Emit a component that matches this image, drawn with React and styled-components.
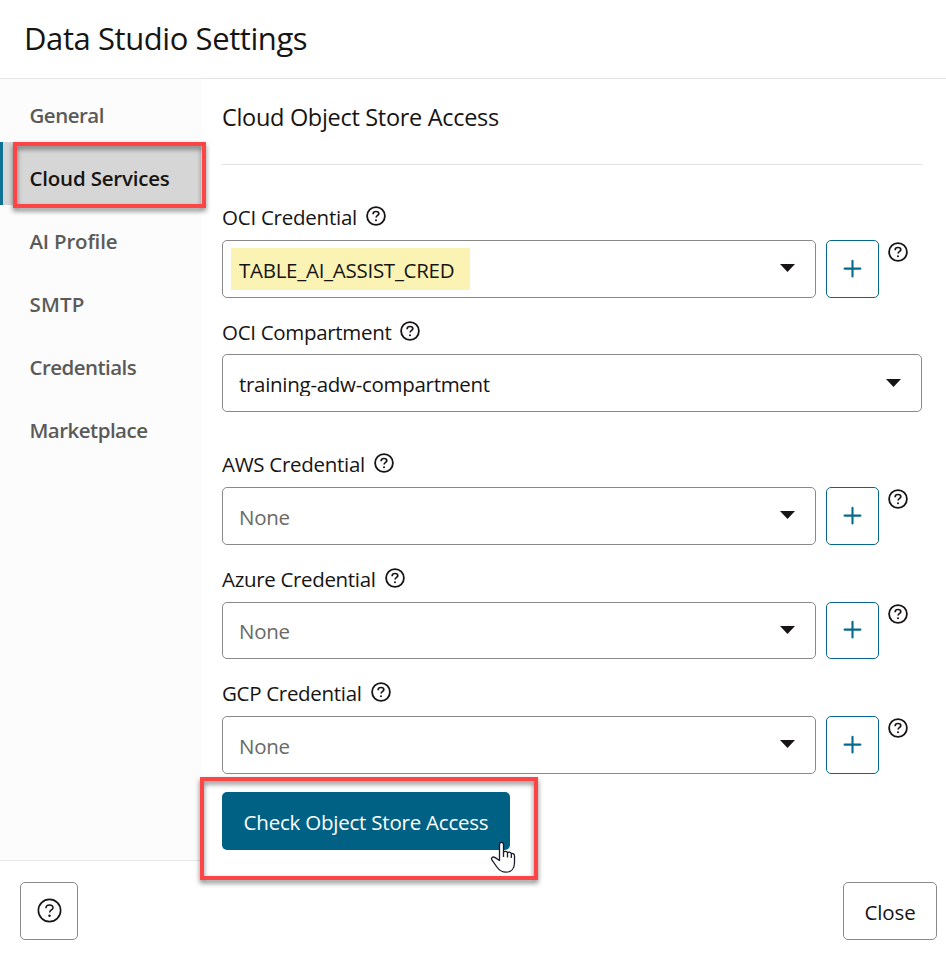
import React from "react";
import styled, { createGlobalStyle } from "styled-components";

const GlobalStyle = createGlobalStyle`
  * { box-sizing: border-box; }
  body {
    margin: 0;
    background: #fff;
    color: #161513;
    font-family: "Open Sans", "Noto Sans", sans-serif;
    font-size: 20.5px;
    line-height: 28px;
  }
  button { font: inherit; color: inherit; cursor: pointer; }
`;

const Dialog = styled.main`
  display: flex;
  flex-direction: column;
  width: 946px;
  height: 958px;
  overflow: hidden;
`;

const Header = styled.header`
  height: 79px;
  padding: 17px 0 0 24px;
  border-bottom: 1px solid #e4e4e4;
`;

const Title = styled.h1`
  margin: 0;
  font-size: 31px;
  font-weight: 400;
  line-height: 42px;
  letter-spacing: -0.42px;
`;

const Body = styled.div`
  display: flex;
  height: 782px;
`;

const Sidebar = styled.nav`
  width: 201px;
  background: #fcfcfc;
  border-bottom: 1px solid #e6e6e6;
`;

const NavItem = styled.a`
  display: block;
  position: relative;
  height: 63px;
  padding: 22px 0 0 ${(p) => (p.$active ? 26.5 : 29.5)}px;
  font-size: 20.5px;
  font-weight: 550;
  letter-spacing: ${(p) => p.$track}px;
  white-space: nowrap;
  color: ${(p) => (p.$active ? "#161513" : "#5b5a58")};
  background: ${(p) => (p.$active ? "#d6d6d6" : "transparent")};
  border-left: ${(p) => (p.$active ? "3px solid #0f7295" : "none")};
`;

const Callout = styled.span`
  position: absolute;
  z-index: 2;
  left: ${(p) => p.$left}px;
  top: ${(p) => p.$top}px;
  width: ${(p) => p.$width}px;
  height: ${(p) => p.$height}px;
  border: 4px solid #fe4545;
  filter: drop-shadow(0 3px 2.5px rgba(0, 0, 0, 0.5));
  pointer-events: none;
`;

const Content = styled.section`
  width: 700px;
  margin-left: 21px;
`;

const Heading = styled.h2`
  height: 86px;
  margin: 0 0 38px;
  padding-top: 22px;
  border-bottom: 1px solid #e2e2e2;
  font-size: 23.5px;
  font-weight: 400;
  line-height: 32px;
  letter-spacing: -0.31px;
`;

const Field = styled.div`
  margin-bottom: ${(p) => p.$gap}px;
`;

const Label = styled.div`
  display: flex;
  height: ${(p) => p.$height}px;
  gap: 9px;
  letter-spacing: ${(p) => p.$track}px;

  svg { margin-top: 3px; }
`;

const Controls = styled.div`
  display: flex;
  align-items: flex-start;
`;

const Select = styled.div`
  display: flex;
  justify-content: space-between;
  flex: 0 0 ${(p) => (p.$wide ? 700 : 594)}px;
  height: ${(p) => p.$height}px;
  padding: 7px 20px 0 8px;
  border: 1px solid #8a8988;
  border-radius: 5px;

  svg { margin-top: ${(p) => (p.$wide ? 17 : 16)}px; }
`;

const Value = styled.span`
  height: ${(p) => (p.$clipped ? 34 : 42)}px;
  padding: ${(p) => p.$pad}px 16px 0 8px;
  overflow: hidden;
  white-space: nowrap;
  letter-spacing: ${(p) => p.$track}px;
  color: ${(p) => (p.$empty ? "#6a6967" : "#161513")};
  background: ${(p) => (p.$marked ? "#faf3b4" : "transparent")};
`;

const AddButton = styled.button`
  display: flex;
  justify-content: center;
  width: 53px;
  height: ${(p) => p.$height}px;
  margin: 0 9px 0 10px;
  padding: ${(p) => p.$height - 40}px 0 0;
  border: 1px solid #04698c;
  border-radius: 5px;
  background: #fff;
`;

const HelpLink = styled.span`
  display: flex;
  padding-top: 2px;
`;

const ActionArea = styled.div`
  position: relative;
  width: 288px;
`;

const PrimaryButton = styled.button`
  display: block;
  width: 288px;
  height: 58px;
  padding: 2px 0 0;
  border: 0;
  border-radius: 5px;
  background: #006184;
  color: #fff;
  letter-spacing: -0.22px;
`;

const Pointer = styled.svg`
  position: absolute;
  z-index: 3;
  left: 268px;
  top: 49px;
`;

const Footer = styled.footer`
  display: flex;
  justify-content: space-between;
  padding: 21px 9px 0 20px;
`;

const FooterButton = styled.button`
  display: flex;
  align-items: center;
  justify-content: center;
  width: ${(p) => p.$width}px;
  height: 58px;
  padding: ${(p) => p.$drop || 0}px 0 0;
  border: 1px solid #8a8988;
  border-radius: 5px;
  background: #fff;
  letter-spacing: -0.12px;

  svg { margin: 0 0 1px; }
`;

function HelpIcon({ size = 20, stroke = 1.8 }) {
  return (
    <svg width={size} height={size} viewBox="0 0 20 20" fill="none">
      <circle cx="10" cy="10" r="8.9" stroke="#161513" strokeWidth={stroke} />
      <path
        d="M7.2 8.2V7.7C7.2 6.2 8.3 5.5 10 5.5s2.8.8 2.8 2.2c0 1.7-2.7 1.8-2.7 3.9"
        stroke="#161513"
        strokeWidth={stroke - 0.1}
      />
      <circle cx="10" cy="14.2" r="1" fill="#161513" />
    </svg>
  );
}

function Caret() {
  return (
    <svg width="15" height="8" viewBox="0 0 15 8">
      <path d="M0 0h15L7.5 8z" fill="#161513" />
    </svg>
  );
}

function PlusIcon() {
  return (
    <svg width="19" height="19" viewBox="0 0 19 19">
      <path d="M9.5 1.7v15.8M1.6 9.6h15.8" stroke="#04698c" strokeWidth="2.1" strokeLinecap="round" />
    </svg>
  );
}

const navItems = [
  { name: "General", track: -0.5 },
  { name: "Cloud Services", track: -0.2, active: true },
  { name: "AI Profile", track: -0.2 },
  { name: "SMTP", track: 0.2 },
  { name: "Credentials", track: -0.55 },
  { name: "Marketplace", track: -0.52 },
];

const fields = [
  { label: "OCI Credential", track: -0.24, value: "TABLE_AI_ASSIST_CRED", valueTrack: -0.27, marked: true, labelHeight: 37, height: 58, gap: 20, pad: 8 },
  { label: "OCI Compartment", track: -0.31, value: "training-adw-compartment", valueTrack: -0.29, clipped: true, wide: true, labelHeight: 36, height: 58, gap: 38, pad: 8 },
  { label: "AWS Credential", track: -0.29, labelHeight: 37, height: 58, gap: 20, pad: 8 },
  { label: "Azure Credential", track: -0.33, labelHeight: 37, height: 57, gap: 20, pad: 7 },
  { label: "GCP Credential", track: -0.31, labelHeight: 37, height: 58, gap: 18, pad: 8 },
];

export default function App() {
  return (
    <Dialog>
      <GlobalStyle />
      <Header>
        <Title>Data Studio Settings</Title>
      </Header>
      <Body>
        <Sidebar>
          {navItems.map((item) => (
            <NavItem key={item.name} $active={item.active} $track={item.track}>
              {item.name}
              {item.active && <Callout $left={10} $top={0} $width={193} $height={66} />}
            </NavItem>
          ))}
        </Sidebar>
        <Content>
          <Heading>Cloud Object Store Access</Heading>
          {fields.map((f) => (
            <Field key={f.label} $gap={f.gap}>
              <Label $track={f.track} $height={f.labelHeight}>
                {f.label}
                <HelpIcon />
              </Label>
              <Controls>
                <Select $wide={f.wide} $height={f.height}>
                  <Value
                    $empty={!f.value}
                    $marked={f.marked}
                    $clipped={f.clipped}
                    $pad={f.pad}
                    $track={f.value ? f.valueTrack : -0.25}
                  >
                    {f.value || "None"}
                  </Value>
                  <Caret />
                </Select>
                {!f.wide && (
                  <>
                    <AddButton $height={f.height} aria-label="Add credential">
                      <PlusIcon />
                    </AddButton>
                    <HelpLink>
                      <HelpIcon />
                    </HelpLink>
                  </>
                )}
              </Controls>
            </Field>
          ))}
          <ActionArea>
            <PrimaryButton>Check Object Store Access</PrimaryButton>
            <Callout $left={-22} $top={-15} $width={338} $height={103} />
            <Pointer width="26" height="33" viewBox="0 0 26 33">
              <path
                d="M9.5 19.5V3.6c0-2.9 4-2.9 4 0V11c1.2-1.2 3.3-.8 4 .6 1.3-.9 3.2-.5 3.8 1 1.5-.5 3.2.5 3.2 2.3v6.6c0 6-3.3 9.7-8.6 9.7-4.3 0-6.8-2-9-5.2l-4.7-6.6c-1.9-2.7.7-4.2 3-2.8z"
                fill="#fff"
                stroke="#1b1b2b"
                strokeWidth="1.3"
                strokeLinejoin="round"
              />
              <path d="M13.5 11v5M17.5 11.6v4.8M21.3 12.6v4.3" stroke="#1b1b2b" strokeWidth="1.3" />
            </Pointer>
          </ActionArea>
        </Content>
      </Body>
      <Footer>
        <FooterButton $width={58} aria-label="Help">
          <HelpIcon size={25} stroke={1.3} />
        </FooterButton>
        <FooterButton $width={94} $drop={2}>Close</FooterButton>
      </Footer>
    </Dialog>
  );
}
